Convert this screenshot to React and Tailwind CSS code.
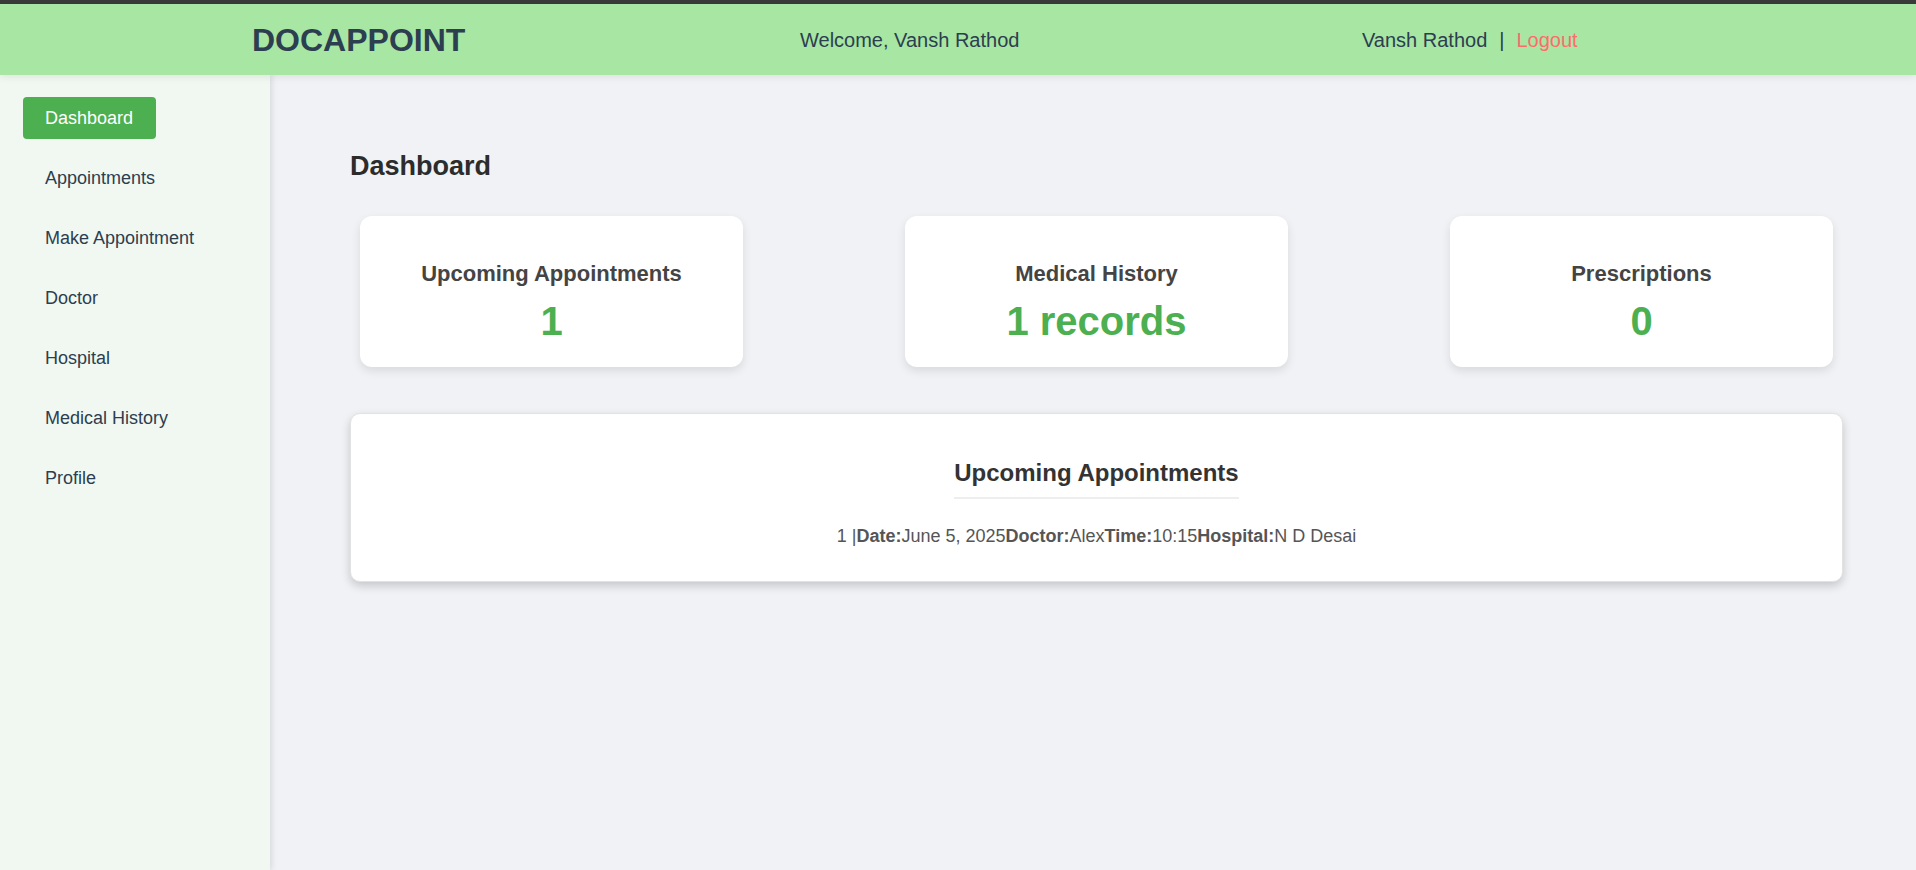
import React from 'react';

const navItems = ['Dashboard', 'Appointments', 'Make Appointment', 'Doctor', 'Hospital', 'Medical History', 'Profile'];

const stats = [
  { title: 'Upcoming Appointments', value: '1' },
  { title: 'Medical History', value: '1 records' },
  { title: 'Prescriptions', value: '0' }
];

const StatCard = ({ title, value }) => (
  <div className="mx-[10px] w-[383px] h-[151px] bg-white rounded-[12px] shadow-[0_4px_10px_rgba(0,0,0,0.1)] flex flex-col items-center pt-[45px]">
    <h3 className="text-[22px] font-bold leading-[1.15] text-[#444]">{title}</h3>
    <p className="mt-[12px] text-[40px] font-bold leading-[1.15] text-[#4caf50]">{value}</p>
  </div>
);

const App = () => {
  const active = 'Dashboard';

  return (
    <div className="min-h-screen flex flex-col bg-[#f0f2f5] font-['Liberation_Sans',Arial,sans-serif]">
      <div className="h-[4px] bg-[#3b3b3b]" />
      <header className="relative z-10 h-[71px] bg-[#a8e6a3] flex items-center pl-[252px] shadow-[0_2px_8px_rgba(0,0,0,0.08)]">
        <h1 className="w-[210px] whitespace-nowrap text-[32px] font-bold text-[#2c3e50] leading-none">DOCAPPOINT</h1>
        <span className="ml-[338px] w-[222px] whitespace-nowrap text-[20px] text-[#2c3e50]">Welcome, Vansh Rathod</span>
        <div className="ml-[340px] text-[20px] text-[#2c3e50] flex items-center">
          <span>Vansh Rathod</span>
          <span className="mx-[12px]">|</span>
          <a href="#" className="text-[#ff6b6b]">Logout</a>
        </div>
      </header>

      <div className="flex flex-1">
        <aside className="w-[270px] bg-[#f1f8f1] shadow-[2px_0_6px_rgba(0,0,0,0.1)] pt-[22px] px-[23px] flex flex-col gap-[18px]">
          {navItems.map(item => (
            <a
              key={item}
              href="#"
              className={
                item === active
                  ? 'h-[42px] w-[133px] flex items-center pl-[22px] rounded-[4px] bg-[#4caf50] text-white text-[18px]'
                  : 'h-[42px] flex items-center pl-[22px] text-[#2c3e50] text-[18px]'
              }
            >
              {item}
            </a>
          ))}
        </aside>

        <main className="flex-1 pl-[80px] pr-[73px] pt-[76px]">
          <h2 className="text-[27px] font-bold leading-[1.15] text-[#2c2c2c]">Dashboard</h2>

          <div className="mt-[34px] flex justify-between">
            {stats.map(s => (
              <StatCard key={s.title} title={s.title} value={s.value} />
            ))}
          </div>

          <div className="mt-[46px] h-[169px] bg-white rounded-[10px] border border-[#e2e2e2] shadow-[0_4px_10px_rgba(0,0,0,0.18)] flex flex-col items-center pt-[45px]">
            <h3 className="text-[24px] font-bold leading-[1.15] text-[#333] pb-[10px] border-b-2 border-[#eeeeee]">
              Upcoming Appointments
            </h3>
            <p className="mt-[27px] text-[18px] leading-[1.15] text-[#555]">
              1 |<strong>Date:</strong>June 5, 2025<strong>Doctor:</strong>Alex<strong>Time:</strong>10:15<strong>Hospital:</strong>N D Desai
            </p>
          </div>
        </main>
      </div>
    </div>
  );
};

export default App;
